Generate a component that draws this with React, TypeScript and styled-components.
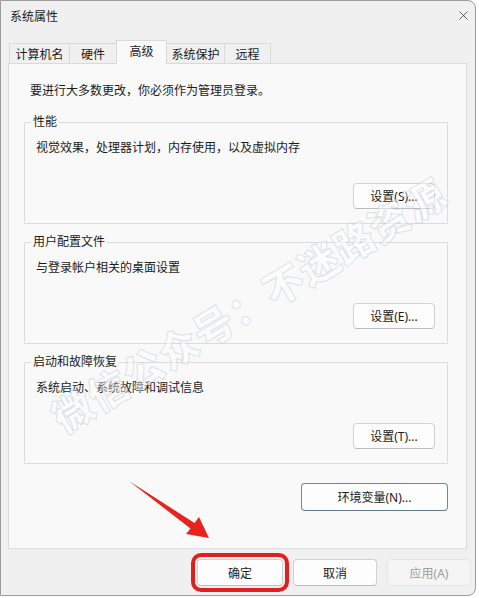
import React from "react";
import styled, { createGlobalStyle } from "styled-components";
import { X } from "lucide-react";

const Global = createGlobalStyle`
  html, body { margin: 0; padding: 0; background: #ffffff; }
  body { font-family: "Noto Sans", "Noto Sans CJK SC", sans-serif; font-size: 12px; color: #1b1b1b; }
  * { box-sizing: border-box; }
`;

const Window = styled.div`
  position: relative;
  width: 476px;
  height: 596px;
  background: #f0f0f0;
  border: 1px solid #9c9c9c;
  border-radius: 0 8px 8px 0;
  display: flex;
  flex-direction: column;
  overflow: hidden;
`;

const TitleBar = styled.div`
  height: 29px;
  display: flex;
  align-items: center;
  justify-content: space-between;
  padding: 0 4px 0 9px;
  flex-shrink: 0;
`;

const Title = styled.span`
  font-size: 12px;
  color: #1b1b1b;
`;

const Close = styled.div`
  width: 16px;
  height: 16px;
  display: flex;
  align-items: center;
  justify-content: center;
  color: #333;
`;

const TabStrip = styled.div`
  display: flex;
  align-items: flex-end;
  height: 34px;
  padding-left: 9px;
  position: relative;
  z-index: 1;
  margin-bottom: -1px;
`;

const Tab = styled.div<{ $w: number; $active?: boolean }>`
  width: ${(p) => p.$w}px;
  height: ${(p) => (p.$active ? 24 : 21)}px;
  display: flex;
  align-items: center;
  justify-content: center;
  padding-bottom: ${(p) => (p.$active ? 3 : 0)}px;
  background: ${(p) => (p.$active ? "#f9f9f9" : "#f0f0f0")};
  border: 1px solid #d9d9d9;
  border-bottom: ${(p) => (p.$active ? "1px solid #f9f9f9" : "1px solid #d9d9d9")};
  margin-left: -1px;
  font-size: 12px;
  color: #1b1b1b;
`;

const Panel = styled.div`
  margin: 0 8px 0 7px;
  height: 486px;
  background: #f9f9f9;
  border: 1px solid #dcdcdc;
  padding: 19px 18px 0 15px;
  display: flex;
  flex-direction: column;
`;

const Intro = styled.div`
  line-height: 16px;
  padding-left: 6px;
  margin-bottom: 15px;
`;

const Group = styled.fieldset`
  margin: 0 0 10px 0;
  padding: 0 12px 14px 6px;
  border: 1px solid #dcdcdc;
  border-radius: 1px;
  display: flex;
  flex-direction: column;
`;

const Legend = styled.legend`
  padding: 0 2px;
  line-height: 16px;
  font-size: 12px;
`;

const Desc = styled.div`
  margin-top: 10px;
  line-height: 16px;
  padding-left: 5px;
`;

const Button = styled.button<{ $w: number; $h?: number; $dark?: boolean; $disabled?: boolean }>`
  width: ${(p) => p.$w}px;
  height: ${(p) => p.$h ?? 27}px;
  font-family: "Noto Sans", "Noto Sans CJK SC", sans-serif;
  font-size: 12px;
  color: ${(p) => (p.$disabled ? "#9d9d9d" : "#1b1b1b")};
  background: ${(p) => (p.$disabled ? "#f5f5f5" : "#fdfdfd")};
  border: 1px solid ${(p) => (p.$dark ? "#6f8aa0" : p.$disabled ? "#e6e6e6" : "#d2d2d2")};
  border-bottom-color: ${(p) => (p.$dark ? "#5f7b92" : p.$disabled ? "#e6e6e6" : "#bdbdbd")};
  border-radius: 4px;
  padding: 0;
  display: flex;
  align-items: center;
  justify-content: center;
`;

const ButtonRow = styled.div<{ $mt: number }>`
  display: flex;
  justify-content: flex-end;
  margin-top: ${(p) => p.$mt}px;
`;

const Footer = styled.div`
  display: flex;
  justify-content: flex-end;
  gap: 10px;
  padding: 10px 4px 0 0;
`;

const Highlight = styled.div`
  outline: 4px solid #e0201c;
  outline-offset: 2px;
  border-radius: 4px;
`;

const Watermark = styled.div`
  position: absolute;
  left: 247px;
  top: 303px;
  transform: translate(-50%, -50%) rotate(-31deg);
  white-space: nowrap;
  font-family: "Noto Sans CJK SC", sans-serif;
  font-weight: 900;
  font-size: 40px;
  letter-spacing: 1px;
  color: rgba(255, 255, 255, 0.45);
  -webkit-text-stroke: 1px rgba(185, 195, 205, 0.45);
  pointer-events: none;
`;

const Arrow = styled.svg`
  position: absolute;
  left: 0;
  top: 0;
  pointer-events: none;
`;

export default function App() {
  const tabs = [
    { t: "计算机名", w: 61 },
    { t: "硬件", w: 48 },
    { t: "高级", w: 51, a: true },
    { t: "系统保护", w: 59 },
    { t: "远程", w: 47 },
  ];
  const groups = [
    { title: "性能", desc: "视觉效果，处理器计划，内存使用，以及虚拟内存", btn: "设置(S)..." },
    { title: "用户配置文件", desc: "与登录帐户相关的桌面设置", btn: "设置(E)..." },
    { title: "启动和故障恢复", desc: "系统启动、系统故障和调试信息", btn: "设置(T)..." },
  ];
  return (
    <>
      <Global />
      <Window>
        <TitleBar>
          <Title>系统属性</Title>
          <Close>
            <X size={15} strokeWidth={1.2} />
          </Close>
        </TitleBar>
        <TabStrip>
          {tabs.map((t) => (
            <Tab key={t.t} $w={t.w} $active={t.a}>
              {t.t}
            </Tab>
          ))}
        </TabStrip>
        <Panel>
          <Intro>要进行大多数更改，你必须作为管理员登录。</Intro>
          {groups.map((g) => (
            <Group key={g.title}>
              <Legend>{g.title}</Legend>
              <Desc>{g.desc}</Desc>
              <ButtonRow $mt={27}>
                <Button $w={82} $h={26}>{g.btn}</Button>
              </ButtonRow>
            </Group>
          ))}
          <ButtonRow $mt={9}>
            <Button $w={147} $h={28} $dark>环境变量(N)...</Button>
          </ButtonRow>
        </Panel>
        <Footer>
          <Highlight>
            <Button $w={86}>确定</Button>
          </Highlight>
          <Button $w={84}>取消</Button>
          <Button $w={84} $disabled>应用(A)</Button>
        </Footer>
        <Watermark>微信公众号：不迷路资源</Watermark>
        <Arrow width="476" height="596" viewBox="0 0 476 596">
          <polygon
            points="128,480 193.5,522 198,516 208,537 185,533 189.5,527.5"
            fill="#e8221d"
          />
        </Arrow>
      </Window>
    </>
  );
}
